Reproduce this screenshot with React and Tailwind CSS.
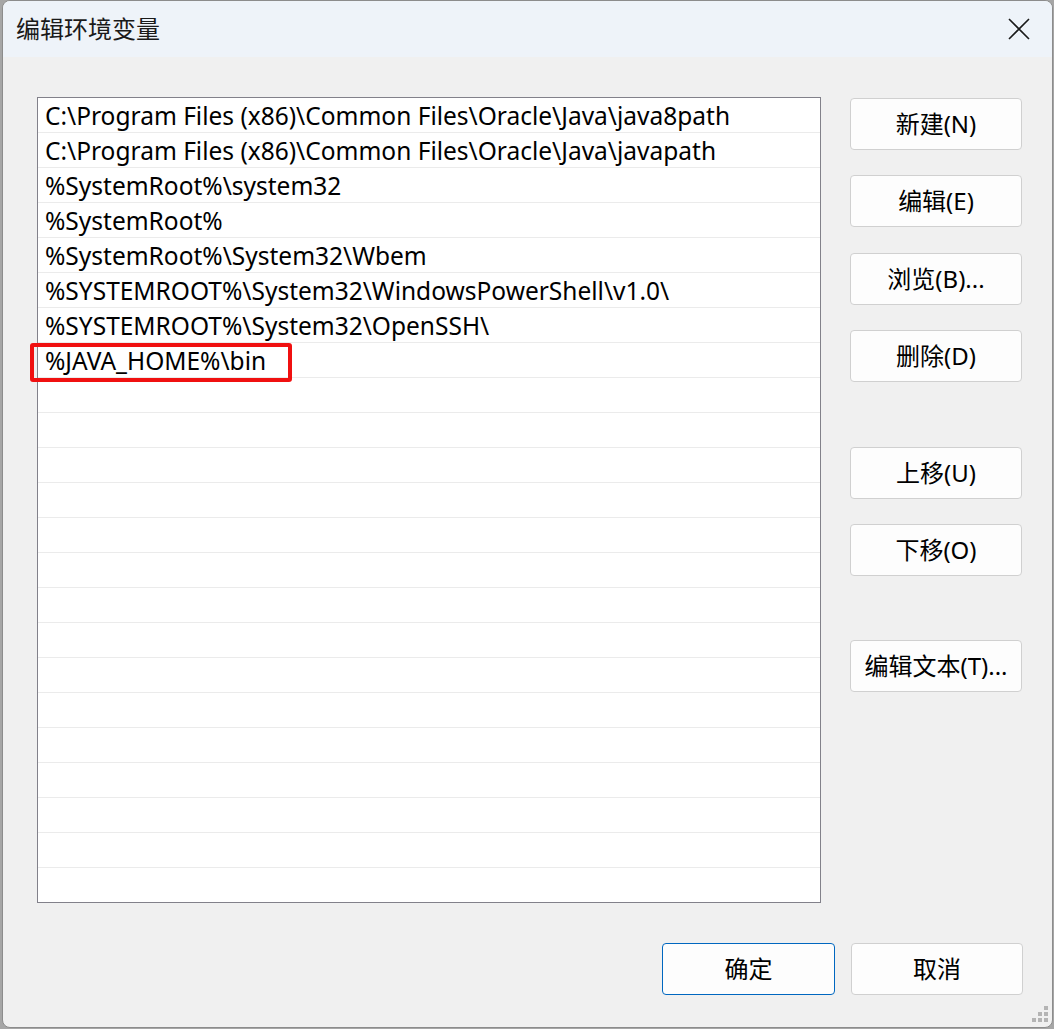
const font = { fontFamily: '"Segoe UI", "Noto Sans", "Noto Sans CJK SC", sans-serif' };

const paths = [
  'C:\\Program Files (x86)\\Common Files\\Oracle\\Java\\java8path',
  'C:\\Program Files (x86)\\Common Files\\Oracle\\Java\\javapath',
  '%SystemRoot%\\system32',
  '%SystemRoot%',
  '%SystemRoot%\\System32\\Wbem',
  '%SYSTEMROOT%\\System32\\WindowsPowerShell\\v1.0\\',
  '%SYSTEMROOT%\\System32\\OpenSSH\\',
  '%JAVA_HOME%\\bin',
];

function Btn({ children, className = '', primary = false }) {
  return (
    <button
      className={`h-[52px] w-[172px] rounded-[4px] border bg-[#fdfdfd] text-[24px] text-black ${
        primary ? 'border-[#0067c0]' : 'border-[#d0d0d0]'
      } ${className}`}
    >
      {children}
    </button>
  );
}

export default function App() {
  const rows = Array.from({ length: 23 }, (_, i) => paths[i] || '');

  return (
    <div className="w-[1054px] h-[1029px] bg-[#a6a6a6] pl-[2px] pb-[1px]" style={font}>
      <div className="relative flex h-full w-[1051px] flex-col overflow-hidden rounded-lg border border-[#8c8c8c] bg-[#f0f0f0]">
        {/* title bar */}
        <div className="flex h-[56px] shrink-0 items-center justify-between bg-[#eef3f9] pl-[13px] pr-[22px]">
          <span className="text-[24px] text-[#1a1a1a]">编辑环境变量</span>
          <svg width="22" height="22" viewBox="0 0 22 22">
            <path d="M1 1 L21 21 M21 1 L1 21" stroke="#1a1a1a" strokeWidth="1.6" />
          </svg>
        </div>

        {/* body */}
        <div className="flex pl-[34px] pr-[29px] pt-[40px]">
          <div className="relative h-[806px] w-[784px] border border-[#82818a] bg-white">
            {rows.map((p, i) => (
              <div
                key={i}
                className={`h-[35px] whitespace-nowrap pl-[7px] text-[24.5px] leading-[36px] text-black ${
                  i < 22 ? 'border-b border-[#ebebeb]' : ''
                }`}
              >
                {p}
              </div>
            ))}
            <div className="absolute left-[-8px] top-[245px] h-[39px] w-[262px] rounded-[3px] border-[4px] border-[#f01010]" />
          </div>

          <div className="ml-[29px] flex flex-col">
            <Btn className="mt-[1px]">新建(N)</Btn>
            <Btn className="mt-[25px]">编辑(E)</Btn>
            <Btn className="mt-[26px]">浏览(B)...</Btn>
            <Btn className="mt-[25px]">删除(D)</Btn>
            <Btn className="mt-[65px]">上移(U)</Btn>
            <Btn className="mt-[25px]">下移(O)</Btn>
            <Btn className="mt-[64px]">编辑文本(T)...</Btn>
          </div>
        </div>

        {/* footer */}
        <div className="flex justify-end gap-[16px] pr-[29px] pt-[40px]">
          <Btn primary className="w-[173px]">确定</Btn>
          <Btn>取消</Btn>
        </div>

        {/* resize grip */}
        <svg className="absolute bottom-[3px] right-[2px]" width="20" height="20" viewBox="0 0 20 20">
          <g fill="#b4b4b4">
            <rect x="14" y="2" width="4" height="4" />
            <rect x="8" y="8" width="4" height="4" />
            <rect x="14" y="8" width="4" height="4" />
            <rect x="2" y="14" width="4" height="4" />
            <rect x="8" y="14" width="4" height="4" />
            <rect x="14" y="14" width="4" height="4" />
          </g>
        </svg>
      </div>
    </div>
  );
}
